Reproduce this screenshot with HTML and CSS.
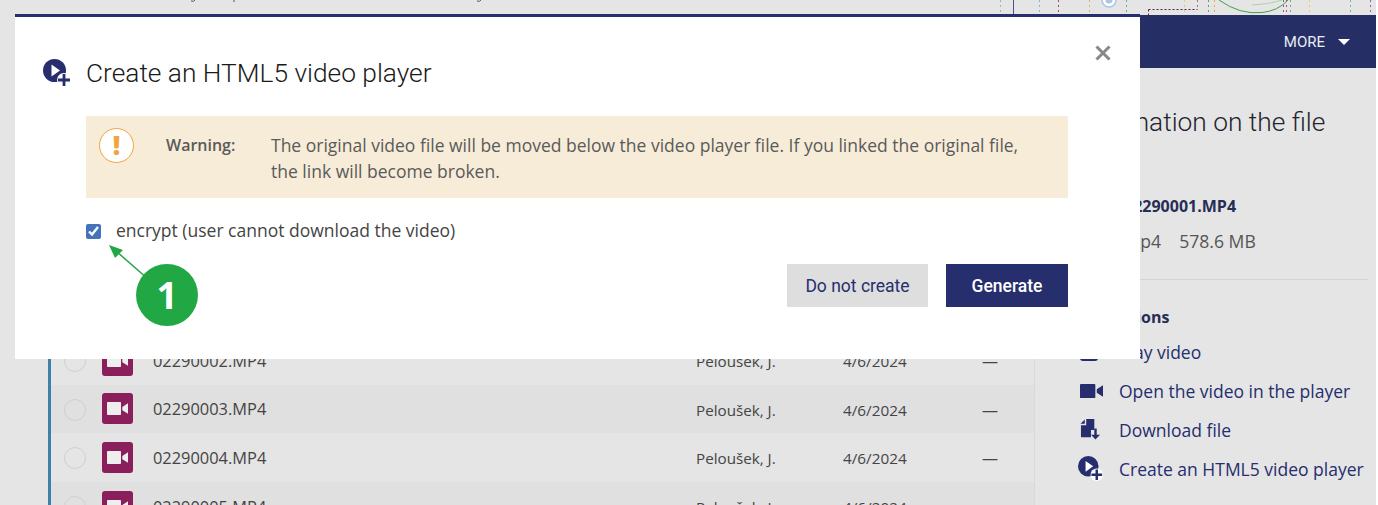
FILE: index.html
```html
<!DOCTYPE html>
<html lang="en">
<head>
<meta charset="utf-8">
<title>Create an HTML5 video player</title>
<link rel="stylesheet" href="styles.css">
</head>
<body>
<svg width="0" height="0" class="defs" aria-hidden="true">
  <defs>
    <symbol id="i-player" viewBox="0 0 28 28">
      <path d="M11.500 0a11.500 11.500 0 1 0 0 23a11.500 11.500 0 0 0 0-23z" fill="#262e6e"/>
      <path d="M8.500 5.500v12l8.500-6z" fill="#fff"/>
      <circle cx="21" cy="21" r="7" fill="#fff"/>
      <path d="M19.600 15h2.800v4.600H27v2.800h-4.600V27h-2.800v-4.600H15v-2.800h4.600z" fill="#262e6e"/>
    </symbol>
    <symbol id="i-cam" viewBox="0 0 24 16" preserveAspectRatio="none">
      <path d="M1 0h14a1 1 0 0 1 1 1v14a1 1 0 0 1-1 1H1a1 1 0 0 1-1-1V1a1 1 0 0 1 1-1zM17.500 6L24 1.500v13L17.500 10z" fill="currentColor"/>
    </symbol>
    <symbol id="i-play" viewBox="0 0 18 18">
      <rect width="18" height="18" rx="3" fill="currentColor"/>
    </symbol>
    <symbol id="i-down" viewBox="0 0 22 22">
      <path d="M6.500 0H15v11.500h-3.500V19H1V6.500h5.500zM5 0.500V5H0.500z" fill="#262e6e"/>
      <path d="M15 10h2.500v6.500H21L16.200 21.500L11.500 16.500H15z" fill="#262e6e"/>
    </symbol>
  </defs>
</svg>

<div class="page">
  <svg class="strip" width="1376" height="15" viewBox="0 0 1376 15" aria-hidden="true">
    <g fill="none" stroke-width="1" stroke-dasharray="2 3">
      <path d="M1000.500 0v15" stroke="#8fc48f"/>
      <path d="M1039.500 0v15" stroke="#8fb0d4"/>
      <path d="M1058.500 0v15" stroke="#a04a60"/>
      <path d="M1089.500 0v15" stroke="#e0b070"/>
      <path d="M1126.500 0v15" stroke="#70a8a8"/>
      <path d="M1197.500 0v9" stroke="#a07080"/>
      <path d="M1184.500 0v15" stroke="#e8cc70"/>
      <path d="M1148.500 9.500h49M1148.500 9.500v6" stroke="#602040" stroke-dasharray="2 2"/>
      <path d="M1208.500 0v15" stroke="#60a860"/>
      <path d="M1214.500 0v15" stroke="#eaa850"/>
      <path d="M1283.500 0v15" stroke="#8060b0"/>
      <path d="M1286.500 0v15" stroke="#e04060"/>
      <path d="M1290.500 0v15" stroke="#60b090"/>
      <path d="M1309.500 0v15" stroke="#eccc60"/>
      <path d="M1350.500 0v15" stroke="#70b0b0"/>
      <path d="M1370.500 0v15" stroke="#9060b0"/>
    </g>
    <path d="M1013.500 0v15" stroke="#262e6e" fill="none" opacity=".8"/>
    <circle cx="1109" cy="0" r="7" fill="#fff" stroke="#a9c6e6" stroke-width="1.500"/>
    <circle cx="1109" cy="0" r="3.500" fill="#a9c6e6"/>
    <path d="M1219 0Q1240 15 1262 12.500Q1278 11 1288 0" stroke="#43a047" stroke-width="1" fill="none"/>
    <path d="M1252 5Q1270 4 1282 0" stroke="#a9d3a9" stroke-width="1" fill="none"/>
    <path d="M191 1q3 1 4-1M234 0v2M477 1q3 1 4-1" stroke="#555" stroke-width="1" fill="none"/>
  </svg>

  <header class="topbar">
    <span class="more">MORE</span>
    <span class="caret"></span>
  </header>

  <div class="content">
    <main class="files">
      <div class="list">
        <div class="row">
          <span class="radio"></span>
          <span class="thumb"><svg class="thumb-icon"><use href="#i-cam"/></svg></span>
          <span class="c-name">02290002.MP4</span>
          <span class="c-author">Peloušek, J.</span>
          <span class="c-date">4/6/2024</span>
          <span class="c-dash">—</span>
        </div>
        <div class="row alt">
          <span class="radio"></span>
          <span class="thumb"><svg class="thumb-icon"><use href="#i-cam"/></svg></span>
          <span class="c-name">02290003.MP4</span>
          <span class="c-author">Peloušek, J.</span>
          <span class="c-date">4/6/2024</span>
          <span class="c-dash">—</span>
        </div>
        <div class="row">
          <span class="radio"></span>
          <span class="thumb"><svg class="thumb-icon"><use href="#i-cam"/></svg></span>
          <span class="c-name">02290004.MP4</span>
          <span class="c-author">Peloušek, J.</span>
          <span class="c-date">4/6/2024</span>
          <span class="c-dash">—</span>
        </div>
        <div class="row alt">
          <span class="radio"></span>
          <span class="thumb"><svg class="thumb-icon"><use href="#i-cam"/></svg></span>
          <span class="c-name">02290005.MP4</span>
          <span class="c-author">Peloušek, J.</span>
          <span class="c-date">4/6/2024</span>
          <span class="c-dash">—</span>
        </div>
      </div>
    </main>

    <aside class="side">
      <h2 class="side-title">Information on the file</h2>
      <p class="file-title">02290001.MP4</p>
      <p class="file-meta"><span>mp4</span><span>578.6 MB</span></p>
      <hr class="rule">
      <h3 class="actions-title">Operations</h3>
      <ul class="actions">
        <li><svg class="act-icon play"><use href="#i-play"/></svg><span>Play video</span></li>
        <li><svg class="act-icon cam"><use href="#i-cam"/></svg><span>Open the video in the player</span></li>
        <li><svg class="act-icon dl"><use href="#i-down"/></svg><span>Download file</span></li>
        <li><svg class="act-icon pl"><use href="#i-player"/></svg><span>Create an HTML5 video player</span></li>
      </ul>
    </aside>
  </div>

  <section class="modal">
    <button class="close" type="button" aria-label="Close">
      <svg width="16" height="16" viewBox="0 0 16 16"><path d="M1.500 1.500l13 13M14.500 1.500l-13 13" stroke="#888" stroke-width="3" fill="none"/></svg>
    </button>
    <div class="modal-head">
      <svg class="head-icon"><use href="#i-player"/></svg>
      <h1 class="modal-title">Create an HTML5 video player</h1>
    </div>
    <div class="warning">
      <span class="warn-icon">!</span>
      <strong class="warn-label">Warning:</strong>
      <p class="warn-text">The original video file will be moved below the video player file. If you linked the original file, the link will become broken.</p>
    </div>
    <label class="check">
      <input type="checkbox" checked>
      <span>encrypt (user cannot download the video)</span>
    </label>
    <div class="buttons">
      <button class="btn btn-light" type="button">Do not create</button>
      <button class="btn btn-dark" type="button">Generate</button>
    </div>
    <svg class="arrow" width="50" height="44" viewBox="0 0 50 44" aria-hidden="true">
      <path d="M40 35L8 7" stroke="#22a745" stroke-width="1.500" fill="none"/>
      <path d="M1 1L15 6L7 14z" fill="#22a745"/>
    </svg>
    <span class="marker">1</span>
  </section>
</div>
</body>
</html>
```

FILE: styles.css
```css
* { box-sizing: border-box; }

html, body {
  margin: 0;
  padding: 0;
  height: 505px;
  overflow: hidden;
  background: #fff;
}

.defs { position: absolute; }

.page {
  position: relative;
  width: 1376px;
  height: 505px;
  overflow: hidden;
  background: #e5e5e5;
  font-family: "Open Sans", sans-serif;
  display: flex;
  flex-direction: column;
}

.strip { display: block; flex: none; }

.topbar {
  flex: none;
  height: 53px;
  margin-left: 1035px;
  background: #262e66;
  color: #e8edf5;
  display: flex;
  align-items: center;
  justify-content: flex-end;
  gap: 13px;
  padding-right: 26px;
  font-family: Roboto, sans-serif;
  font-size: 15px;
}

.caret {
  width: 0;
  height: 0;
  border-left: 6px solid transparent;
  border-right: 6px solid transparent;
  border-top: 6px solid #fff;
}

.content {
  flex: 1;
  display: flex;
  min-height: 0;
}

.files {
  flex: none;
  width: 1035px;
  padding: 268px 0 0 48px;
  border-right: 1px solid #d9d9d9;
}

.list { border-left: 3px solid #3f7fa8; }

.row {
  display: flex;
  align-items: center;
  height: 48.600px;
  padding-left: 13px;
  color: #444;
  font-size: 16.400px;
}

.row.alt { background: #e0e0e0; }

.radio {
  flex: none;
  width: 22px;
  height: 22px;
  margin-top: 2px;
  border: 1px solid #cfcfcf;
  border-radius: 50%;
}

.thumb {
  flex: none;
  width: 31px;
  height: 31px;
  margin-left: 16px;
  border-radius: 3px;
  background: #8a1f5c;
  color: #eee;
  display: flex;
  align-items: center;
  justify-content: center;
}

.thumb-icon { width: 21px; height: 13px; }

.c-name { width: 543px; margin-left: 20px; }
.c-author { width: 147px; font-size: 15.200px; margin-top: 2px; }
.c-date { width: 139px; font-size: 15.300px; margin-top: 2px; }
.c-dash { font-size: 16px; margin-top: 2px; }

.side {
  flex: 1;
  padding: 35px 8px 0 45px;
  color: #444;
}

.side-title {
  margin: 0 0 0 -8px;
  font-family: Roboto, sans-serif;
  font-weight: 300;
  font-size: 26.300px;
  line-height: 38px;
  color: #1f2430;
}

.file-title {
  margin: 54px 0 0 44px;
  font-size: 16px;
  font-weight: 700;
  line-height: 22px;
  color: #262e55;
}

.file-meta {
  margin: 13px 0 0 44px;
  display: flex;
  gap: 18px;
  font-size: 17.600px;
  line-height: 22px;
  color: #555;
}

.rule {
  margin: 27px 0 0;
  border: 0;
  border-top: 1px solid #d4d4d4;
}

.actions-title {
  margin: 26px 0 0;
  font-size: 16px;
  font-weight: 700;
  line-height: 22px;
  color: #262e55;
}

.actions {
  list-style: none;
  margin: 4px 0 0;
  padding: 0;
  color: #262e6e;
  font-size: 17.500px;
}

.actions li {
  display: flex;
  align-items: center;
  height: 39px;
}

.act-icon { flex: none; margin-right: 16px; }
.act-icon.play { width: 18px; height: 18px; margin-right: 21px; }
.act-icon.cam { width: 23px; height: 14px; }
.act-icon.dl { width: 21px; height: 21px; margin-right: 18px; }
.act-icon.pl { width: 25px; height: 25px; margin-left: -2px; margin-right: 16px; }

.modal {
  position: absolute;
  left: 15px;
  top: 14px;
  width: 1125px;
  height: 345px;
  background: #fff;
  border-top: 3px solid #262e6e;
  padding: 37px 72px 0 71px;
}

.close {
  position: absolute;
  right: 29px;
  top: 28px;
  padding: 0;
  border: 0;
  background: none;
  line-height: 0;
}

.modal-head {
  display: flex;
  align-items: center;
  height: 38px;
}

.head-icon {
  width: 28px;
  height: 28px;
  margin-left: -43px;
  margin-right: 15px;
  flex: none;
}

.modal-title {
  margin: 0;
  font-family: Roboto, sans-serif;
  font-weight: 300;
  font-size: 26.300px;
  line-height: 38px;
  color: #1a1a1a;
}

.warning {
  display: flex;
  align-items: flex-start;
  height: 82px;
  margin-top: 24px;
  background: #f7ecd8;
  padding: 12px 40px 0 13px;
  color: #5a5a5a;
  font-size: 17.500px;
  line-height: 26px;
}

.warn-icon {
  flex: none;
  width: 35px;
  height: 35px;
  border: 1px solid #f3a43c;
  border-radius: 50%;
  background: #fff;
  color: #f3a43c;
  font-weight: 800;
  font-size: 26px;
  line-height: 32px;
  text-align: center;
}

.warn-label {
  flex: none;
  width: 105px;
  margin: 4px 0 0 32px;
  font-size: 16px;
  font-weight: 600;
}

.warn-text { margin: 4px 0 0; }

.check {
  display: flex;
  align-items: center;
  height: 24px;
  margin-top: 20px;
  color: #444;
  font-size: 17.500px;
}

.check input {
  width: 15px;
  height: 15px;
  margin: 3px 15px 0 0;
  accent-color: #4472bb;
}

.buttons {
  display: flex;
  justify-content: flex-end;
  gap: 18px;
  margin-top: 22px;
}

.btn {
  height: 43px;
  border: 0;
  font-family: Roboto, sans-serif;
  font-size: 17.500px;
  padding: 0;
}

.btn-light { width: 141px; background: #dedede; color: #262e6e; }
.btn-dark { width: 122px; background: #262e6e; color: #fff; font-weight: 500; }

.arrow {
  position: absolute;
  left: 93px;
  top: 227px;
}

.marker {
  position: absolute;
  left: 121px;
  top: 247px;
  width: 62px;
  height: 62px;
  border-radius: 50%;
  background: #22a745;
  color: #fff;
  font-family: "Open Sans", sans-serif;
  font-weight: 700;
  font-size: 37px;
  line-height: 62px;
  text-align: center;
}
```
